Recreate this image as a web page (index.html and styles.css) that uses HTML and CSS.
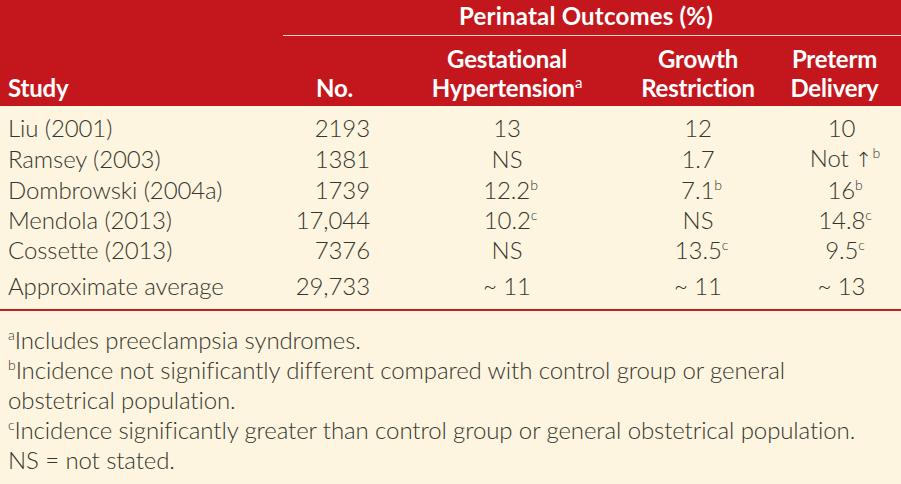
FILE: index.html
```html
<!DOCTYPE html>
<html>
<head>
<meta charset="utf-8">
<link rel="stylesheet" href="styles.css">
</head>
<body>
<table class="tbl">
  <colgroup>
    <col class="c-study">
    <col class="c-no">
    <col class="c-gest">
    <col class="c-growth">
    <col class="c-pre">
  </colgroup>
  <thead>
    <tr class="hrow1">
      <th class="h-empty"></th>
      <th class="h-group" colspan="4"><span class="group-label">Perinatal Outcomes (%)</span></th>
    </tr>
    <tr class="hrow2">
      <th class="h-study">Study</th>
      <th class="h-no">No.</th>
      <th class="h-center">Gestational<br>Hypertension<sup class="hsup">a</sup></th>
      <th class="h-center">Growth<br>Restriction</th>
      <th class="h-center h-pre">Preterm<br>Delivery</th>
    </tr>
  </thead>
  <tbody>
    <tr class="first">
      <td class="study">Liu (2001)</td><td class="num">2193</td><td class="val">13</td><td class="val">12</td><td class="val">10</td>
    </tr>
    <tr>
      <td class="study">Ramsey (2003)</td><td class="num">1381</td><td class="val">NS</td><td class="val">1.7</td><td class="val">Not <span class="arrow">↑</span><sup>b</sup></td>
    </tr>
    <tr>
      <td class="study">Dombrowski (2004a)</td><td class="num">1739</td><td class="val">12.2<sup>b</sup></td><td class="val">7.1<sup>b</sup></td><td class="val">16<sup>b</sup></td>
    </tr>
    <tr>
      <td class="study">Mendola (2013)</td><td class="num">17,044</td><td class="val">10.2<sup>c</sup></td><td class="val">NS</td><td class="val">14.8<sup>c</sup></td>
    </tr>
    <tr class="last-data">
      <td class="study">Cossette (2013)</td><td class="num">7376</td><td class="val">NS</td><td class="val">13.5<sup>c</sup></td><td class="val">9.5<sup>c</sup></td>
    </tr>
    <tr class="avg">
      <td class="study">Approximate average</td><td class="num">29,733</td><td class="val">~ 11</td><td class="val">~ 11</td><td class="val">~ 13</td>
    </tr>
  </tbody>
</table>
<div class="notes">
  <p class="note"><sup>a</sup>Includes preeclampsia syndromes.</p>
  <p class="note"><sup>b</sup>Incidence not significantly different compared with control group or general obstetrical population.</p>
  <p class="note"><sup>c</sup>Incidence significantly greater than control group or general obstetrical population.</p>
  <p class="note">NS = not stated.</p>
</div>
</body>
</html>
```

FILE: styles.css
```css
html, body {
  margin: 0;
  padding: 0;
  background: #fdf5df;
}
body {
  width: 901px;
  height: 484px;
  overflow: hidden;
  font-family: Lato, "Liberation Sans", sans-serif;
  font-size: 24px;
  font-weight: 300;
  letter-spacing: -0.1px;
  color: #36352f;
}
.tbl {
  width: 901px;
  table-layout: fixed;
  border-collapse: collapse;
  border-spacing: 0;
}
.c-study { width: 283px; }
.c-no { width: 117px; }
.c-gest { width: 214px; }
.c-growth { width: 168px; }
.c-pre { width: 119px; }

thead th {
  background: #c4171d;
  color: #ffffff;
  font-weight: 700;
  letter-spacing: -0.2px;
  line-height: 29px;
  padding: 0;
}
.hrow1 th {
  padding-top: 1px;
  padding-bottom: 5px;
  vertical-align: top;
}
.h-group {
  text-align: center;
  border-bottom: 1px solid #f3d0cf;
}
.group-label {
  position: relative;
  left: -6px;
  letter-spacing: 0.2px;
}
.hrow2 th {
  padding-top: 8px;
  padding-bottom: 4px;
  vertical-align: bottom;
}
.h-study {
  text-align: left;
  padding-left: 8px !important;
}
.h-no {
  text-align: right;
  padding-right: 47px !important;
}
.h-center {
  text-align: center;
}
.h-pre {
  padding-right: 14px !important;
}
.hsup {
  font-size: 15px;
  font-weight: 400;
  vertical-align: 9px;
  line-height: 0;
}

tbody td {
  line-height: 30px;
  padding: 0;
}
tbody tr.first td { padding-top: 7px; }
tbody tr.avg td {
  padding-top: 6px;
  padding-bottom: 8px;
  border-bottom: 2px solid #c21d25;
}
.study {
  padding-left: 8px !important;
  text-align: left;
  white-space: nowrap;
}
.num {
  text-align: right;
  padding-right: 30px !important;
}
.val {
  text-align: center;
}
sup {
  font-size: 14px;
  line-height: 0;
  vertical-align: 9px;
}
.val sup {
  margin-right: -7px;
}
.arrow {
  font-family: "DejaVu Sans", sans-serif;
  font-weight: 300;
  font-size: 21px;
}

.notes {
  padding: 14px 0 0 8px;
  width: 860px;
}
.note {
  margin: 0;
  line-height: 30px;
}
.note sup {
  font-size: 14px;
  vertical-align: 9px;
}
```
